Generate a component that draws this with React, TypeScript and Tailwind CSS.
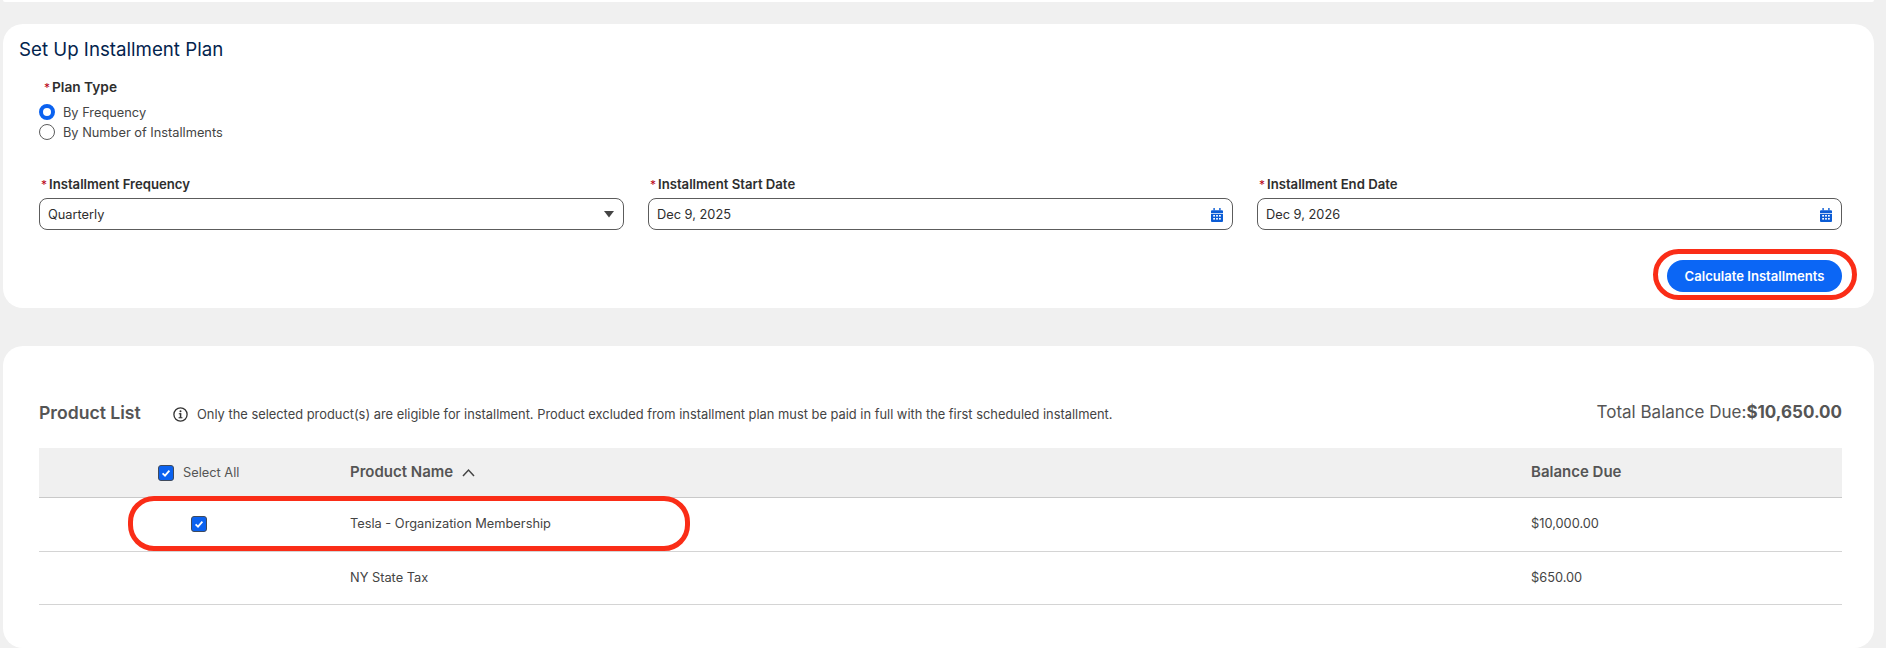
import React from "react";

const font = { fontFamily: "Inter, 'Liberation Sans', sans-serif" };

function Star() {
  return <span className="text-[#ba0517] mr-[2px] text-[12px] font-normal">*</span>;
}

function Calendar() {
  return (
    <svg width="12" height="14" viewBox="0 0 12 14" className="shrink-0 mr-[2px]">
      <rect x="2.4" y="0" width="1.4" height="2.4" fill="#0b5cd5" />
      <rect x="8.2" y="0" width="1.4" height="2.4" fill="#0b5cd5" />
      <path d="M0 3.2a1 1 0 0 1 1-1h10a1 1 0 0 1 1 1V5H0z" fill="#0b5cd5" />
      <path d="M0 5.8h12V13a1 1 0 0 1-1 1H1a1 1 0 0 1-1-1z" fill="#0b5cd5" />
      <g fill="#ffffff">
        <rect x="2.2" y="7" width="1.8" height="1.6" />
        <rect x="5.1" y="7" width="1.8" height="1.6" />
        <rect x="8" y="7" width="1.8" height="1.6" />
        <rect x="2.2" y="10" width="1.8" height="1.6" />
        <rect x="5.1" y="10" width="1.8" height="1.6" />
        <rect x="8" y="10" width="1.8" height="1.6" />
      </g>
    </svg>
  );
}

function Check() {
  return (
    <span className="w-4 h-4 rounded-[3px] bg-[#0b62f0] border border-[#3f4a5c] flex items-center justify-center shrink-0">
      <svg width="10" height="10" viewBox="0 0 10 10">
        <path d="M1.6 5.4 4 7.6 8.4 2.6" fill="none" stroke="#fff" strokeWidth="1.8" />
      </svg>
    </span>
  );
}

function Field({ label, children }: { label: string; children: React.ReactNode }) {
  return (
    <div>
      <div className="h-[20px] pl-[2px] flex items-center text-[13.15px] font-semibold text-[#2e2e2e] leading-none">
        <Star />
        {label}
      </div>
      <div className="mt-[3px] h-[32px] rounded-[8px] border border-[#5c5c5c] flex items-center justify-between pl-[8px] pr-[7px] pt-[1px] text-[12.8px] text-[#2e2e2e]">
        {children}
      </div>
    </div>
  );
}

export default function App() {
  return (
    <div className="w-[1886px] h-[648px] overflow-hidden bg-[#f0f0f0] pl-[3px] pr-[12px] text-[#444444]" style={font}>
      <div className="h-[2px] bg-white rounded-b-[2px]" />

      <section className="mt-[22px] h-[284px] bg-white rounded-[20px] pl-[16px] pr-[32px]">
        <h2 className="pt-[14px] h-[38px] text-[18.7px] leading-[24px] text-[#03234d] font-normal">Set Up Installment Plan</h2>
        <div className="pl-[20px] pt-[16px]">
          <div className="pl-[5px] h-[20px] flex items-center text-[13.7px] font-semibold text-[#2e2e2e] leading-none">
            <Star />
            Plan Type
          </div>
          <div className="mt-[4px] flex flex-col text-[12.8px] text-[#444444]">
            <label className="h-[20px] flex items-center gap-[8px]">
              <span className="w-4 h-4 rounded-full border-[4px] border-[#0b62f0] bg-white" />
              <span className="pt-[1px]">By Frequency</span>
            </label>
            <label className="h-[20px] flex items-center gap-[8px]">
              <span className="w-4 h-4 rounded-full border border-[#5c5c5c] bg-white" />
              <span className="pt-[1px]">By Number of Installments</span>
            </label>
          </div>
        </div>
        <div className="ml-[20px] mt-[33px] grid grid-cols-3 gap-x-[24px]">
          <Field label="Installment Frequency">
            <span>Quarterly</span>
            <svg width="10" height="7" viewBox="0 0 10 7" className="mr-[2px]">
              <path d="M0 0h10L5 6.5z" fill="#444444" />
            </svg>
          </Field>
          <Field label="Installment Start Date">
            <span>Dec 9, 2025</span>
            <Calendar />
          </Field>
          <Field label="Installment End Date">
            <span>Dec 9, 2026</span>
            <Calendar />
          </Field>
        </div>
        <div className="mt-[30px] flex justify-end">
          <div className="relative">
            <button className="w-[175px] h-[32px] rounded-full bg-[#0b66f5] text-white text-[13.1px] font-semibold pt-[1px]">Calculate Installments</button>
            <div className="absolute left-[-14px] right-[-15px] top-[-11px] bottom-[-8px] rounded-[26px] border-[5px] border-[#fa2d17]" />
          </div>
        </div>
      </section>

      <section className="mt-[38px] h-[302px] bg-white rounded-[20px] pl-[36px] pr-[32px] pt-[52px]">
        <div className="flex items-center justify-between h-[30px]">
          <div className="flex items-center">
            <h3 className="w-[134px] text-[17.6px] font-semibold text-[#555555]">Product List</h3>
            <svg width="15" height="15" viewBox="0 0 15 15" className="mr-[9px] mt-[3px]">
              <circle cx="7.5" cy="7.5" r="6.6" fill="none" stroke="#333" strokeWidth="1.3" />
              <rect x="6.8" y="6.4" width="1.5" height="4.4" fill="#333" />
              <rect x="5.8" y="6.2" width="2.4" height="1.1" fill="#333" />
              <rect x="5.6" y="10.2" width="3.8" height="1.1" fill="#333" />
              <circle cx="7.5" cy="4.3" r="1" fill="#333" />
            </svg>
            <span className="text-[12.87px] text-[#444444] mt-[3px]">Only the selected product(s) are eligible for installment. Product excluded from installment plan must be paid in full with the first scheduled installment.</span>
          </div>
          <div className="text-[17px] text-[#555555]">
            Total Balance Due:<span className="font-bold">$10,650.00</span>
          </div>
        </div>

        <div className="mt-[20px] grid grid-cols-[311px_1181px_1fr] h-[50px] items-center bg-[#f0f0f0] border-b border-[#c9c9c9] text-[#555555]">
          <div className="pl-[119px] flex items-center gap-[9px] text-[12.8px]">
            <Check />
            Select All
          </div>
          <div className="flex items-center gap-[9px] text-[15px] font-semibold">
            Product Name
            <svg width="13" height="9" viewBox="0 0 13 9">
              <path d="M1 8 6.5 2 12 8" fill="none" stroke="#444" strokeWidth="1.5" />
            </svg>
          </div>
          <div className="text-[15px] font-semibold">Balance Due</div>
        </div>

        <div className="relative grid grid-cols-[311px_1181px_1fr] h-[54px] items-center border-b border-[#d4d4d4] text-[12.8px]">
          <div className="pl-[152px] pb-[2px]">
            <Check />
          </div>
          <div className="pb-[1px]">Tesla - Organization Membership</div>
          <div className="pb-[1px]">$10,000.00</div>
          <div className="absolute left-[89px] top-[-2px] w-[562px] h-[55px] rounded-[26px] border-[5px] border-[#fa2d17]" />
        </div>

        <div className="grid grid-cols-[311px_1181px_1fr] h-[53px] items-center border-b border-[#d4d4d4] text-[12.8px]">
          <div />
          <div>NY State Tax</div>
          <div>$650.00</div>
        </div>
      </section>
    </div>
  );
}
